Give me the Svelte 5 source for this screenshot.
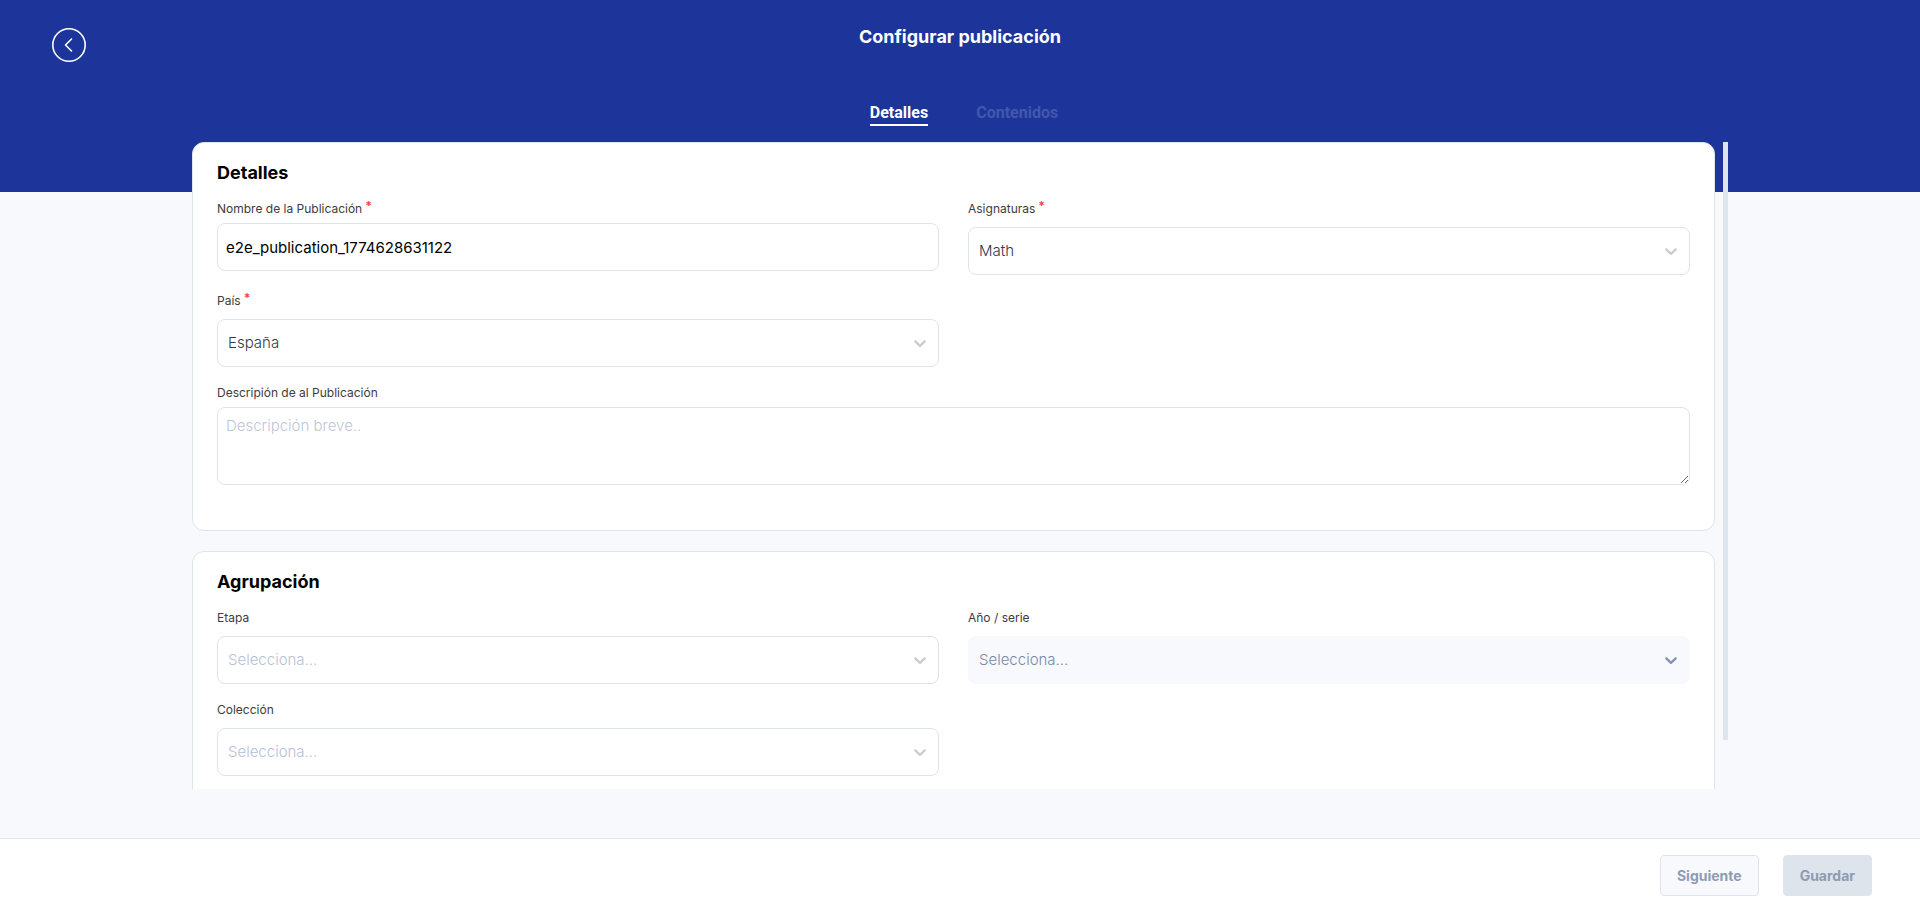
<script>
  let name = $state('e2e_publication_1774628631122');
  let description = $state('');
  let viewHeight = $state(0);
  let contentHeight = $state(0);
  let scrollTop = $state(0);

  const thumbHeight = $derived(
    contentHeight > viewHeight ? (viewHeight / contentHeight) * 100 : 0
  );
  const thumbTop = $derived(contentHeight ? (scrollTop / contentHeight) * viewHeight : 0);
</script>

{#snippet selectField(id, label, value, required, disabled)}
  <div class="field">
    <label for={id}>{label}{#if required}<span class="required">*</span>{/if}</label>
    <div class="select" class:disabled>
      <select {id} {disabled} class:placeholder={!value}>
        <option>{value || 'Selecciona...'}</option>
      </select>
      <svg viewBox="0 0 20 20" width="20" height="20" aria-hidden="true">
        <path d="M4.516 7.548c0.436-0.446 1.043-0.481 1.576 0l3.908 3.747 3.908-3.747c0.533-0.481 1.141-0.446 1.574 0 0.436 0.445 0.408 1.197 0 1.615-0.406 0.418-4.695 4.502-4.695 4.502-0.217 0.223-0.502 0.335-0.787 0.335s-0.57-0.112-0.789-0.335c0 0-4.287-4.084-4.695-4.502s-0.436-1.17 0-1.615z" />
      </svg>
    </div>
  </div>
{/snippet}

<div class="page">
  <header>
    <button class="back" type="button" aria-label="Volver">
      <svg viewBox="0 0 34 34" width="34" height="34" aria-hidden="true">
        <circle cx="17" cy="17" r="16.2" />
        <path d="M19.5 11 L13.5 17 L19.5 23" />
      </svg>
    </button>
    <h1>Configurar publicación</h1>
    <nav>
      <a class="active" href="#detalles">Detalles</a>
      <a href="#contenidos">Contenidos</a>
    </nav>
  </header>

  <main>
    <div
      class="scroller"
      bind:clientHeight={viewHeight}
      onscroll={(event) => (scrollTop = event.currentTarget.scrollTop)}
    >
      <form class="cards" bind:clientHeight={contentHeight}>
        <section class="card">
          <h2>Detalles</h2>
          <div class="fields">
            <div class="field text">
              <label for="name">Nombre de la Publicación<span class="required">*</span></label>
              <input id="name" type="text" bind:value={name} />
            </div>
            {@render selectField('subjects', 'Asignaturas', 'Math', true, false)}
            {@render selectField('country', 'País', 'España', true, false)}
            <div class="field text wide">
              <label for="description">Descripión de al Publicación</label>
              <textarea id="description" placeholder="Descripción breve.." bind:value={description}></textarea>
            </div>
          </div>
        </section>

        <section class="card">
          <h2>Agrupación</h2>
          <div class="fields">
            {@render selectField('stage', 'Etapa', '', false, false)}
            {@render selectField('year', 'Año / serie', '', false, true)}
            {@render selectField('collection', 'Colección', '', false, false)}
          </div>
        </section>
      </form>
    </div>
    <div class="rail">
      <div class="thumb" style:height="{thumbHeight}%" style:margin-top="{thumbTop}px"></div>
    </div>
  </main>

  <footer>
    <button class="next" type="button" disabled>Siguiente</button>
    <button class="save" type="button" disabled>Guardar</button>
  </footer>
</div>

<style>
  :global(body) {
    margin: 0;
  }

  .page,
  .page * {
    box-sizing: border-box;
  }

  .page {
    display: flex;
    flex-direction: column;
    height: 100vh;
    background: #f7f9fd;
    color: #000;
    font-family: Inter, sans-serif;
  }

  header {
    display: grid;
    grid-template-columns: 1fr auto 1fr;
    align-items: start;
    padding: 25px 52px 66px;
    background: #1d359b;
    color: #fff;
  }

  .back {
    display: block;
    width: 34px;
    height: 34px;
    margin-top: 3px;
    padding: 0;
    border: 0;
    background: none;
    cursor: pointer;
  }

  .back svg {
    display: block;
    fill: none;
    stroke: #fff;
    stroke-width: 1.6;
    stroke-linecap: round;
    stroke-linejoin: round;
  }

  h1 {
    margin: 0;
    font-size: 18px;
    line-height: 24px;
    font-weight: 700;
  }

  nav {
    grid-column: 1 / -1;
    display: flex;
    justify-content: center;
    gap: 48px;
    margin-top: 40px;
    padding-left: 8px;
    font-family: Roboto, sans-serif;
    font-size: 16px;
    line-height: 22px;
    font-weight: 700;
  }

  nav a {
    border-bottom: 2px solid transparent;
    color: #4258ad;
    text-decoration: none;
  }

  nav a.active {
    border-color: #fff;
    color: #fff;
  }

  main {
    display: flex;
    flex: 1;
    gap: 8px;
    min-height: 0;
    margin: -50px 10% 49px;
  }

  .scroller {
    flex: 1;
    overflow-y: auto;
    scrollbar-width: none;
  }

  .rail {
    display: flow-root;
    width: 5px;
    overflow: hidden;
  }

  .thumb {
    background: #dee4ec;
  }

  .cards {
    display: flow-root;
  }

  .card {
    margin-bottom: 20px;
    padding: 18px 24px 45px;
    border: 1px solid #dde4ec;
    border-radius: 12px;
    background: #fff;
  }

  h2 {
    margin: 0 0 15px;
    font-size: 18px;
    line-height: 24px;
    font-weight: 700;
  }

  .fields {
    display: grid;
    grid-template-columns: 1fr 1fr;
    gap: 17px 29px;
  }

  .field {
    display: flex;
    flex-direction: column;
    gap: 9px;
  }

  .field.text {
    gap: 5px;
  }

  .wide {
    grid-column: 1 / -1;
  }

  label {
    display: flex;
    gap: 3px;
    color: #3c3c3c;
    font-size: 12px;
    line-height: 18px;
  }

  .required {
    color: #ff4040;
    font-weight: 700;
    line-height: 12px;
  }

  input,
  textarea,
  .select {
    width: 100%;
    height: 48px;
    border: 1px solid #dde4ec;
    border-radius: 8px;
    background: #fff;
  }

  input,
  textarea {
    padding: 0 8px;
    color: #000;
    font: 15px/20px Inter, sans-serif;
  }

  textarea {
    display: block;
    height: 78px;
    padding-top: 8px;
    resize: vertical;
  }

  textarea::placeholder {
    color: #bcc6da;
    font-weight: 300;
  }

  .select {
    display: grid;
    align-items: center;
  }

  .select select,
  .select svg {
    grid-area: 1 / 1;
  }

  select {
    width: 100%;
    height: 46px;
    padding: 0 40px 0 10px;
    border: 0;
    border-radius: 8px;
    background: none;
    color: #33384e;
    font: 300 15px/20px Inter, sans-serif;
    appearance: none;
  }

  select.placeholder {
    color: #b6c1d6;
  }

  .select svg {
    justify-self: end;
    margin-right: 8px;
    fill: #ccc;
    pointer-events: none;
  }

  .select.disabled {
    border-color: #f7f9fc;
    background: #f7f9fc;
  }

  .select.disabled select {
    color: #758aa5;
    opacity: 1;
  }

  .select.disabled svg {
    fill: #8094ad;
  }

  footer {
    display: flex;
    justify-content: flex-end;
    gap: 24px;
    padding: 16px 48px 15px;
    border-top: 1px solid #e2e8ef;
    background: #fff;
  }

  footer button {
    height: 41px;
    padding: 0 16px;
    border: 1px solid #dee4ec;
    border-radius: 4px;
    color: #8f9bb3;
    font: 700 14px/20px Inter, sans-serif;
  }

  .next {
    background: #f7f9fc;
  }

  .save {
    background: #dee4ec;
  }
</style>
